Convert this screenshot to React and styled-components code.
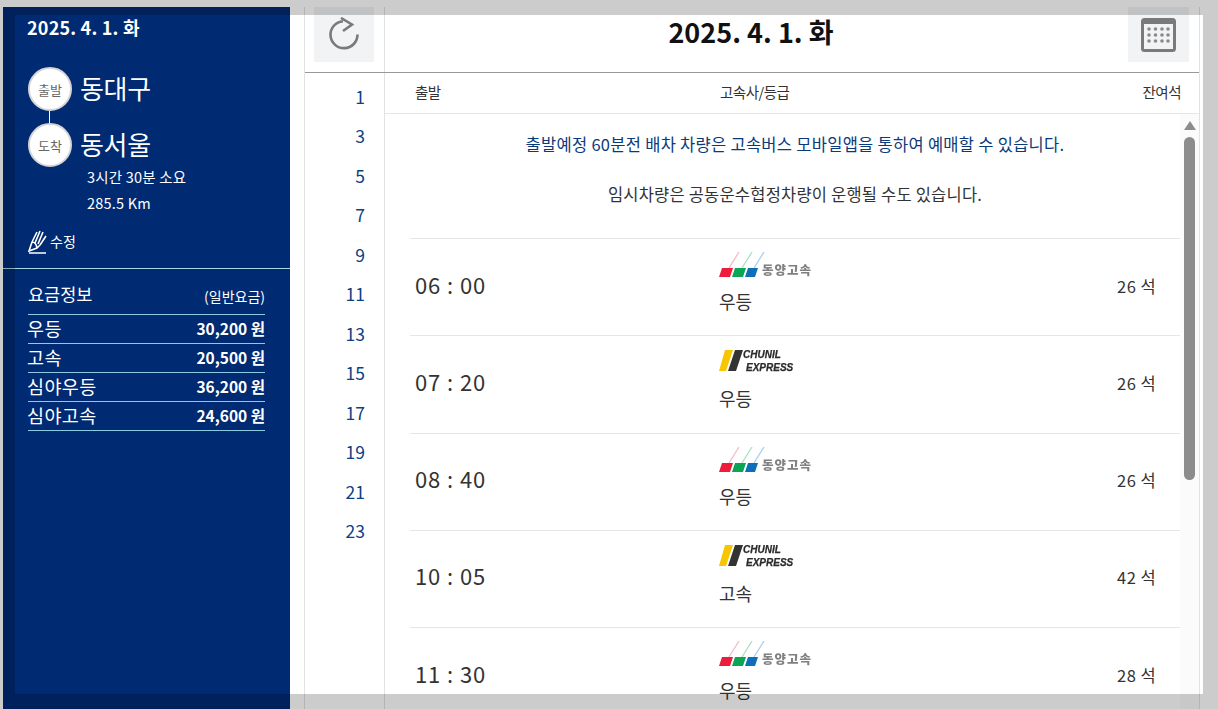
import React from "react";
import styled, { createGlobalStyle } from "styled-components";

const Global = createGlobalStyle`
  html, body { margin: 0; padding: 0; height: 100%; overflow: hidden; background: #fff; }
  body { font-family: "Noto Sans CJK KR", "Noto Sans", sans-serif; }
  #root { height: 100%; }
`;

const Page = styled.div`
  display: flex;
  height: 702px;
  margin: 7px 0 0 3px;
  overflow: hidden;
`;

const Side = styled.aside`
  width: 287px;
  flex: none;
  background: #002a72;
  color: #fff;
`;

const SideDate = styled.div`
  font-size: 18px;
  font-weight: 700;
  line-height: 26px;
  padding: 7px 0 0 24px;
  letter-spacing: 0.2px;
`;

const Route = styled.div`
  padding: 27px 0 0 25px;
`;

const Stop = styled.div`
  display: flex;
  align-items: center;
  gap: 8px;
  height: 44px;
`;

const Connector = styled.div`
  width: 1px;
  height: 12px;
  margin-left: 21px;
  background: #fff;
`;

const Dot = styled.span`
  width: 44px;
  height: 44px;
  box-sizing: border-box;
  border-radius: 50%;
  background: #fff;
  border: 2px solid #d5d5d5;
  color: #666;
  font-size: 13px;
  display: flex;
  align-items: center;
  justify-content: center;
`;

const City = styled.span`
  font-size: 26px;
  line-height: 42px;
  padding-bottom: 2px;
  letter-spacing: -0.3px;
`;

const Meta = styled.div`
  margin: -3px 0 0 84px;
  font-size: 14.5px;
  line-height: 26px;
  letter-spacing: 0.2px;
`;

const EditRow = styled.div`
  display: flex;
  align-items: flex-end;
  gap: 3px;
  margin: 14px 0 0 25px;
  font-size: 14px;
  line-height: 24px;
  height: 24px;
  & span { padding-bottom: 1px; }
`;

const Divider = styled.hr`
  margin: 14px 0 0;
  border: 0;
  border-top: 1px solid #a7d8e6;
`;

const Fares = styled.div`
  padding: 12px 25px 0;
`;

const FareHead = styled.div`
  display: flex;
  justify-content: space-between;
  align-items: flex-end;
  height: 34px;
  padding-bottom: 8px;
  box-sizing: border-box;
  font-size: 17.5px;
  line-height: 24px;
  border-bottom: 1px solid #8ccbe4;
  & small { font-size: 14px; line-height: 20px; }
`;

const FareRow = styled.div`
  display: flex;
  justify-content: space-between;
  align-items: center;
  height: 29px;
  padding-bottom: 3px;
  box-sizing: border-box;
  font-size: 18.5px;
  letter-spacing: 0.4px;
  border-bottom: 1px solid #8ccbe4;
  & span { margin-left: -1px; }
  & b { font-size: 15.5px; font-weight: 700; letter-spacing: 0; }
`;

const Main = styled.main`
  flex: none;
  width: 896px;
  margin-left: 14px;
  border-left: 1px solid #e2e2e2;
  border-right: 1px solid #e2e2e2;
  box-sizing: border-box;
  display: flex;
  flex-direction: column;
  min-height: 0;
`;

const TopBar = styled.header`
  flex: none;
  height: 65px;
  display: flex;
  align-items: flex-start;
  justify-content: space-between;
  border-bottom: 1px solid #999;
  padding: 0 10px 0 9px;
  position: relative;
  &::after {
    content: "";
    position: absolute;
    left: 79px;
    top: 0;
    bottom: 0;
    width: 1px;
    background: #e2e2e2;
  }
`;

const IconButton = styled.button`
  width: ${(p) => p.$w}px;
  height: 55px;
  background: #f2f3f5;
  border: 0;
  padding: 0;
  display: flex;
  align-items: center;
  justify-content: center;
`;

const Title = styled.h1`
  margin: 6px 0 0;
  font-size: 27px;
  line-height: 38px;
  font-weight: 700;
  color: #111;
`;

const Body = styled.div`
  flex: 1;
  display: flex;
  min-height: 0;
`;

const Hours = styled.nav`
  width: 80px;
  flex: none;
  box-sizing: border-box;
  border-right: 1px solid #e2e2e2;
  padding: 4px 19px 0 0;
  text-align: right;
`;

const Hour = styled.div`
  font-size: 17.5px;
  line-height: 39.45px;
  color: #0b3f86;
`;

const Content = styled.div`
  flex: 1;
  min-width: 0;
  display: flex;
  flex-direction: column;
`;

const ColHead = styled.div`
  flex: none;
  height: 41px;
  box-sizing: border-box;
  border-bottom: 1px solid #e6e6e6;
  display: grid;
  grid-template-columns: 305px 1fr auto;
  align-items: center;
  padding: 0 18px 4px 30px;
  font-size: 14.5px;
  letter-spacing: -0.5px;
  color: #333;
`;

const ScrollArea = styled.div`
  flex: 1;
  display: flex;
  min-height: 0;
  overflow: hidden;
`;

const List = styled.div`
  flex: 1;
  min-width: 0;
  padding: 0 0 0 25px;
`;

const Notice = styled.p`
  margin: 0;
  height: 124px;
  box-sizing: border-box;
  padding-top: 18px;
  text-align: center;
  font-size: 16.5px;
  letter-spacing: 0.28px;
  line-height: 25px;
  color: #333;
  & em { font-style: normal; color: #0b3a7a; }
  & span { display: block; margin-top: 25px; letter-spacing: 0.2px; }
`;

const Row = styled.div`
  height: 97.25px;
  box-sizing: border-box;
  border-top: 1px solid #e6e6e6;
  display: grid;
  grid-template-columns: 309px 1fr 63px;
  align-items: center;
  color: #333;
`;

const Time = styled.div`
  font-size: 22px;
  padding: 0 0 7px 5px;
  letter-spacing: 0.9px;
`;

const Bus = styled.div`
  align-self: start;
  font-size: 18px;
  display: flex;
  flex-direction: column;
  align-items: flex-start;
  padding-top: 13px;
  & svg { filter: blur(0.35px); }
  & span { line-height: 26px; margin-top: 6px; }
`;

const Seats = styled.div`
  font-size: 16.5px;
  letter-spacing: 0.5px;
  padding-bottom: 3px;
`;

const Scrollbar = styled.div`
  width: 19px;
  flex: none;
  background: #fbfbfb;
  display: flex;
  flex-direction: column;
  align-items: center;
  padding-top: 7px;
`;

const Arrow = styled.div`
  width: 0;
  height: 0;
  border-left: 6px solid transparent;
  border-right: 6px solid transparent;
  border-bottom: 9px solid #8c8c8c;
`;

const Thumb = styled.div`
  width: 11px;
  height: 343px;
  margin-top: 7px;
  border-radius: 6px;
  background: #8c8c8c;
`;

const Veil = styled.div`
  position: fixed;
  inset: 0;
  border: 15px solid rgba(0, 0, 0, 0.2);
  pointer-events: none;
`;

const LogoText = styled.text`
  font-family: "Noto Sans CJK KR", sans-serif;
  font-weight: 900;
  font-size: 12.5px;
  letter-spacing: 1px;
  fill: #808080;
`;

const ChunilText = styled.text`
  font-family: "Liberation Sans", sans-serif;
  font-weight: 700;
  font-style: italic;
  font-size: 10px;
  fill: #2b2b2b;
  stroke: #2b2b2b;
  stroke-width: 0.25px;
`;

const Dongyang = () => (
  <svg width="100" height="30" viewBox="0 0 100 30">
    <path d="M10 16 L20 0" stroke="#f7b9c4" strokeWidth="1.3" />
    <path d="M23 16 L33 0" stroke="#a9e0c0" strokeWidth="1.3" />
    <path d="M35 16 L45 0" stroke="#a6cfee" strokeWidth="1.3" />
    <polygon points="0,25 3,16 14,16 11,25" fill="#ee1c3c" />
    <polygon points="13,25 16,16 27,16 24,25" fill="#0aa655" />
    <polygon points="26,25 29,16 39,16 36,25" fill="#0d6fb8" />
    <LogoText x="43" y="23">동양고속</LogoText>
  </svg>
);

const Chunil = () => (
  <svg width="80" height="30" viewBox="0 0 80 30">
    <polygon points="0,22 6,1 14,1 7,22" fill="#f7c600" />
    <polygon points="9,22 16,1 24,1 17,22" fill="#333" />
    <ChunilText x="24" y="9">CHUNIL</ChunilText>
    <ChunilText x="27" y="22">EXPRESS</ChunilText>
  </svg>
);

const rows = [
  ["06 : 00", "d", "우등", "26 석"],
  ["07 : 20", "c", "우등", "26 석"],
  ["08 : 40", "d", "우등", "26 석"],
  ["10 : 05", "c", "고속", "42 석"],
  ["11 : 30", "d", "우등", "28 석"],
];

const fares = [
  ["우등", "30,200 원"],
  ["고속", "20,500 원"],
  ["심야우등", "36,200 원"],
  ["심야고속", "24,600 원"],
];

const hours = [1, 3, 5, 7, 9, 11, 13, 15, 17, 19, 21, 23];

export default function App() {
  return (
    <>
      <Global />
      <Page>
        <Side>
          <SideDate>2025. 4. 1. 화</SideDate>
          <Route>
            <Stop><Dot>출발</Dot><City>동대구</City></Stop>
            <Connector />
            <Stop><Dot>도착</Dot><City>동서울</City></Stop>
          </Route>
          <Meta>3시간 30분 소요<br />285.5 Km</Meta>
          <EditRow>
            <svg width="19" height="24" viewBox="0 0 19 24" fill="none" stroke="#fff" strokeWidth="1.6">
              <path d="M4 12 L9 2 M7 13 L12 1 M10 14 L15 2 M12 15 L18 6 M4 12 L1 21 L9 18 L12 15 M4 12 Q8 12 9 18 M1 23 H18" />
            </svg>
            <span>수정</span>
          </EditRow>
          <Divider />
          <Fares>
            <FareHead><span>요금정보</span><small>(일반요금)</small></FareHead>
            {fares.map(([n, p]) => (
              <FareRow key={n}><span>{n}</span><b>{p}</b></FareRow>
            ))}
          </Fares>
        </Side>
        <Main>
          <TopBar>
            <IconButton $w={60} aria-label="새로고침">
              <svg width="32" height="36" viewBox="0 0 32 36" fill="none" stroke="#7a7a7a" strokeWidth="2.6">
                <path d="M15 4.2 A13.5 13.5 0 1 0 29.5 17.5" />
                <path d="M13 1 L24 7.5 L15 14" />
              </svg>
            </IconButton>
            <Title>2025. 4. 1. 화</Title>
            <IconButton $w={61} aria-label="달력">
              <svg width="35" height="34" viewBox="0 0 35 34">
                <rect x="1.5" y="1.5" width="32" height="31" rx="2" fill="#f2f3f5" stroke="#7a7a7a" strokeWidth="3" />
                <rect x="1" y="1" width="33" height="5" fill="#7a7a7a" />
                {[11, 17, 23].map((y) => [8, 14.5, 21, 27].map((x) => (
                  <circle key={`${x}-${y}`} cx={x} cy={y} r="1.8" fill="#8a8a8a" />
                )))}
              </svg>
            </IconButton>
          </TopBar>
          <Body>
            <Hours>
              {hours.map((h) => <Hour key={h}>{h}</Hour>)}
            </Hours>
            <Content>
              <ColHead><span>출발</span><span>고속사/등급</span><span>잔여석</span></ColHead>
              <ScrollArea>
                <List>
                  <Notice>
                    <em>출발예정 60분전 배차 차량은 고속버스 모바일앱을 통하여 예매할 수 있습니다.</em>
                    <span>임시차량은 공동운수협정차량이 운행될 수도 있습니다.</span>
                  </Notice>
                  {rows.map(([t, l, g, s]) => (
                    <Row key={t}>
                      <Time>{t}</Time>
                      <Bus>{l === "d" ? <Dongyang /> : <Chunil />}<span>{g}</span></Bus>
                      <Seats>{s}</Seats>
                    </Row>
                  ))}
                </List>
                <Scrollbar><Arrow /><Thumb /></Scrollbar>
              </ScrollArea>
            </Content>
          </Body>
        </Main>
      </Page>
      <Veil />
    </>
  );
}
